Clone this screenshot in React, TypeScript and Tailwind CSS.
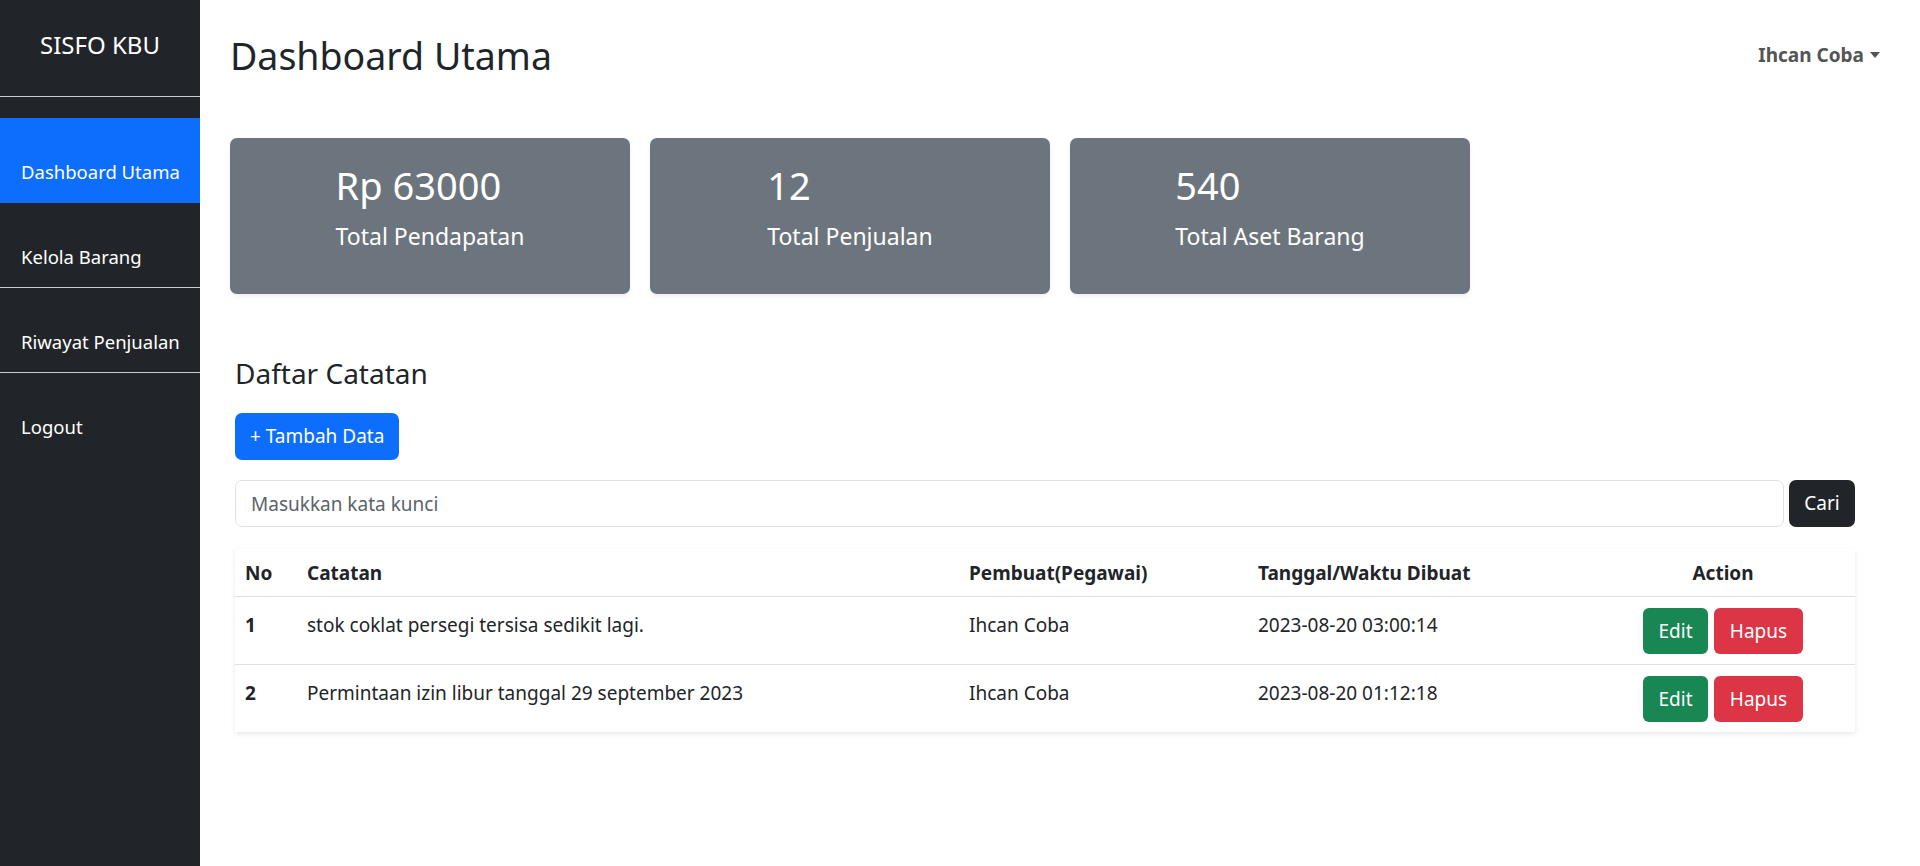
const stats = [
  { value: 'Rp 63000', label: 'Total Pendapatan' },
  { value: '12', label: 'Total Penjualan' },
  { value: '540', label: 'Total Aset Barang' },
]

const notes = [
  { no: 1, text: 'stok coklat persegi tersisa sedikit lagi.', by: 'Ihcan Coba', at: '2023-08-20 03:00:14' },
  { no: 2, text: 'Permintaan izin libur tanggal 29 september 2023', by: 'Ihcan Coba', at: '2023-08-20 01:12:18' },
]

const menu = [
  { label: 'Dashboard Utama', active: true, line: false },
  { label: 'Kelola Barang', active: false, line: true },
  { label: 'Riwayat Penjualan', active: false, line: true },
  { label: 'Logout', active: false, line: false },
]

export default function App() {
  return (
    <div className="flex h-[866px] overflow-hidden bg-white text-[#212529] font-['Noto_Sans',sans-serif]">
      {/* Sidebar */}
      <aside className="w-[200px] shrink-0 bg-[#212529] text-white">
        <div className="h-[97px] pt-[28px] text-center text-[24px] leading-[34px] border-b border-[#c8cbcf]">SISFO KBU</div>
        <div className="h-[21px]" />
        {menu.map(m => (
          <div
            key={m.label}
            className={`h-[85px] pl-[21px] pt-[39px] text-[18.5px] leading-[30px] ${m.active ? 'bg-[#0d6efd]' : ''} ${m.line ? 'border-b border-[#c8cbcf]' : ''}`}
          >
            {m.label}
          </div>
        ))}
      </aside>

      {/* Main */}
      <main className="flex-1 pl-[30px] pr-[40px] pt-[32px]">
        <div className="flex items-start justify-between">
          <h1 className="text-[37.5px] leading-[48px] font-normal">Dashboard Utama</h1>
          <div className="mt-[8px] flex items-center gap-[6px] text-[19px] leading-[30px] font-bold text-[#555]">
            Ihcan Coba
            <span className="w-0 h-0 border-l-[5px] border-r-[5px] border-t-[6px] border-l-transparent border-r-transparent border-t-[#555]" />
          </div>
        </div>

        {/* Stats */}
        <div className="mt-[58px] flex gap-[20px]">
          {stats.map(s => (
            <div key={s.label} className="w-[400px] h-[156px] rounded-[7px] bg-[#6c757d] text-white shadow-[0_2px_4px_rgba(0,0,0,0.075)] flex justify-center pt-[23px]">
              <div className="text-left">
                <p className="text-[38px] leading-[48px]">{s.value}</p>
                <p className="mt-[12px] text-[23px] leading-[30px]">{s.label}</p>
              </div>
            </div>
          ))}
        </div>

        {/* Notes */}
        <div className="ml-[5px] mr-[25px] mt-[61px]">
          <h2 className="text-[28px] leading-[36px] font-normal">Daftar Catatan</h2>
          <button className="mt-[22px] h-[47px] px-[15px] rounded-[7px] bg-[#0d6efd] text-white text-[19px]">+ Tambah Data</button>

          <div className="mt-[20px] flex gap-[5px]">
            <input
              placeholder="Masukkan kata kunci"
              className="flex-1 h-[47px] px-[15px] rounded-[7px] border border-[#dee2e6] text-[19px] placeholder:text-[#5c636a] outline-none"
            />
            <button className="w-[66px] h-[47px] rounded-[7px] bg-[#212529] text-white text-[19px]">Cari</button>
          </div>

          <div className="mt-[22px] bg-white shadow-[0_2px_5px_rgba(0,0,0,0.09)]">
            <table className="w-full text-[19px] leading-[30px] border-collapse">
              <thead>
                <tr className="border-b border-[#dee2e6] font-bold">
                  <th className="w-[62px] px-[10px] pt-[9px] pb-[8px] text-left">No</th>
                  <th className="w-[662px] px-[10px] pt-[9px] pb-[8px] text-left">Catatan</th>
                  <th className="w-[289px] px-[10px] pt-[9px] pb-[8px] text-left">Pembuat(Pegawai)</th>
                  <th className="w-[343px] px-[10px] pt-[9px] pb-[8px] text-left">Tanggal/Waktu Dibuat</th>
                  <th className="px-[10px] pt-[9px] pb-[8px] text-center">Action</th>
                </tr>
              </thead>
              <tbody>
                {notes.map((n, i) => (
                  <tr key={n.no} className={i < notes.length - 1 ? 'border-b border-[#dee2e6]' : ''}>
                    <td className="px-[10px] pt-[13px] align-top font-bold">{n.no}</td>
                    <td className="px-[10px] pt-[13px] align-top">{n.text}</td>
                    <td className="px-[10px] pt-[13px] align-top">{n.by}</td>
                    <td className="px-[10px] pt-[13px] align-top">{n.at}</td>
                    <td className="px-[10px] pt-[11px] pb-[10px] align-top">
                      <div className="flex justify-center gap-[6px]">
                        <button className="h-[46px] w-[65px] rounded-[6px] bg-[#198754] text-white">Edit</button>
                        <button className="h-[46px] w-[89px] rounded-[6px] bg-[#dc3545] text-white">Hapus</button>
                      </div>
                    </td>
                  </tr>
                ))}
              </tbody>
            </table>
          </div>
        </div>
      </main>
    </div>
  )
}
